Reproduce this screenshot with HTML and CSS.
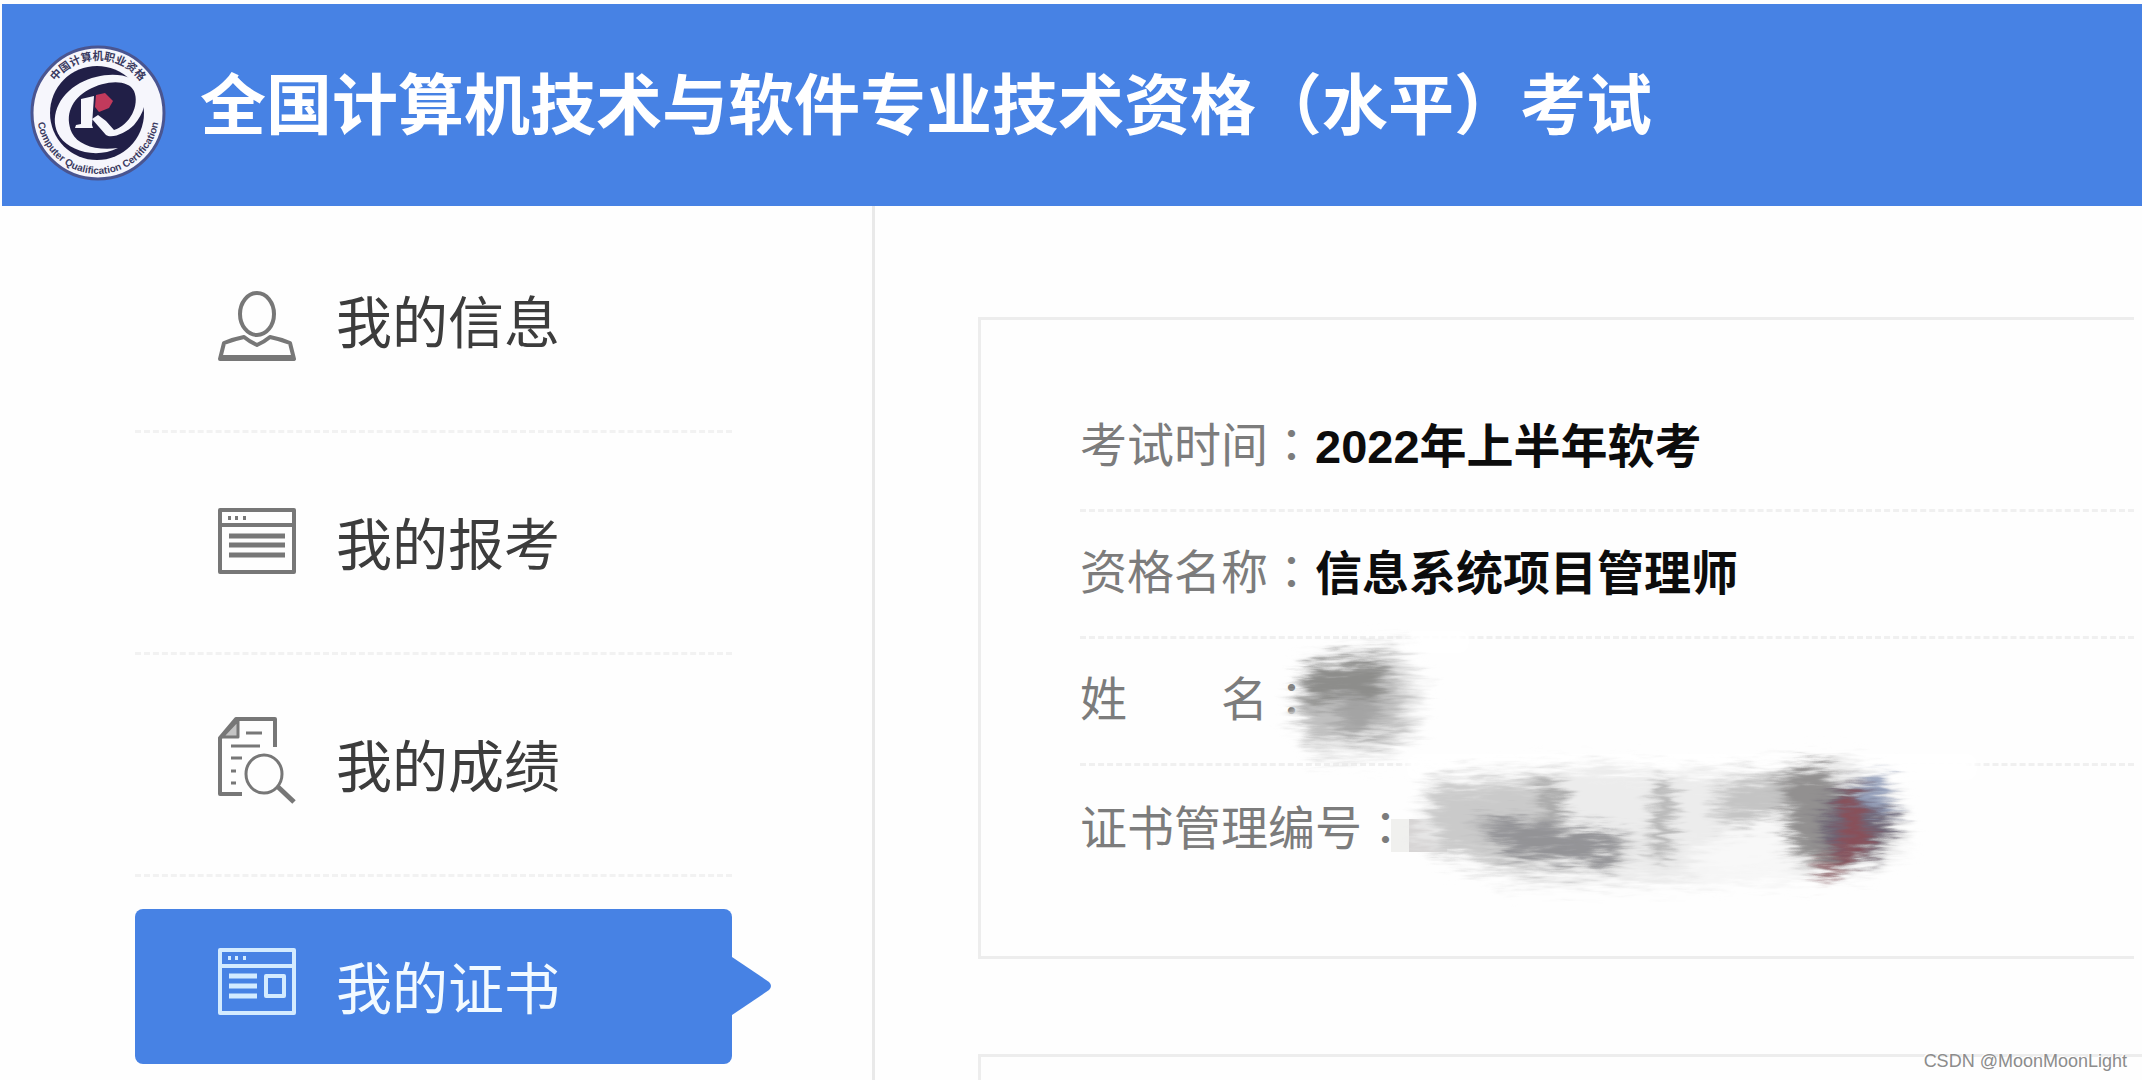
FILE: index.html
```html
<!DOCTYPE html>
<html lang="zh-CN">
<head>
    <meta charset="UTF-8">
    <meta name="viewport" content="width=device-width, initial-scale=1.0">
    <title>全国计算机技术与软件专业技术资格（水平）考试</title>
    <link rel="stylesheet" href="styles.css">
</head>
<body>
    <header class="header">
        <svg class="logo" viewBox="0 0 136 136" aria-hidden="true">
            <defs>
                <path id="ring-top" d="M15 68a53 53 0 0 1 106 0"/>
                <path id="ring-bottom" d="M7 68a61 61 0 0 0 122 0"/>
            </defs>
            <circle cx="68" cy="68" r="66" fill="#f6f6fc" stroke="#4a5590" stroke-width="3"/>
            <circle cx="67" cy="68" r="47" fill="#211f47"/>
            <text class="ring-text" font-size="11"><textPath href="#ring-top" startOffset="50%" text-anchor="middle">中国计算机职业资格</textPath></text>
            <text class="ring-text" font-size="10"><textPath href="#ring-bottom" startOffset="50%" text-anchor="middle">Computer Qualification Certification</textPath></text>
            <path d="M112 44C104 26 72 26 50 38C28 50 18 74 30 92C40 106 66 114 88 103C66 106 48 100 42 88C34 70 42 54 58 45C76 35 98 34 104 46C110 60 100 80 84 85L76 76L68 70L62 74L76 90C82 94 96 88 104 80C114 68 118 56 112 44Z" fill="#f6f6fc"/>
            <path d="M51 54L64 51L62 80L63 83H45L46 80L51 79Z" fill="#f6f6fc"/>
            <path d="M66 50L75 48L83 56L79 63L69 67L65 62Z" fill="#c23a5c"/>
        </svg>
        <h1>全国计算机技术与软件专业技术资格（水平）考试</h1>
    </header>

    <div class="page">
        <nav class="sidebar">
            <ul class="menu">
                <li>
                    <a href="#info">
                        <svg class="icon" viewBox="0 0 78 90" aria-hidden="true">
                            <ellipse cx="39" cy="38" rx="17" ry="21"/>
                            <path d="M2 83L6 67Q16 63 26 61Q32 66 39 69Q46 66 52 61Q62 63 72 67L76 83Z"/>
                            <path d="M4 81H74"/>
                        </svg>
                        <span>我的信息</span>
                    </a>
                </li>
                <li>
                    <a href="#apply">
                        <svg class="icon" viewBox="0 0 78 90" aria-hidden="true">
                            <path d="M2 12H76V74H2ZM2 27H76"/>
                            <path d="M10 20H13M17 20H20M25 20H28"/>
                            <path d="M11 38H67M11 47H67M11 57H67" stroke-width="5"/>
                        </svg>
                        <span>我的报考</span>
                    </a>
                </li>
                <li>
                    <a href="#score">
                        <svg class="icon" viewBox="0 0 78 90" aria-hidden="true">
                            <path d="M57 27V-1H18L2 18V74H24"/>
                            <path d="M20 0V17H4Z" fill="#c4c4c4" stroke-width="3"/>
                            <path d="M28 13H44M13 26H42M13 38H24M13 51H18M13 63H18" stroke-width="3"/>
                            <ellipse cx="46" cy="54" rx="18" ry="19" stroke-width="3"/>
                            <path d="M59 66L76 82" stroke-width="5"/>
                        </svg>
                        <span>我的成绩</span>
                    </a>
                </li>
                <li>
                    <a href="#cert" class="active" aria-current="page">
                        <svg class="icon" viewBox="0 0 78 90" aria-hidden="true">
                            <path d="M2 8H76V71H2ZM2 24H76"/>
                            <path d="M10 16H13M17 16H20M25 16H28"/>
                            <path d="M11 34H39M11 44H39M11 54H39" stroke-width="5"/>
                            <path d="M48 34H66V54H48Z"/>
                        </svg>
                        <span>我的证书</span>
                        <svg class="arrow" viewBox="0 0 40 58" aria-hidden="true">
                            <path d="M0 0L37 25Q41 29 37 33L0 58Z"/>
                        </svg>
                    </a>
                </li>
            </ul>
        </nav>

        <main class="content">
            <section class="card">
                <dl class="details">
                    <div class="row">
                        <dt>考试时间<span class="colon" lang="zh-TW">：</span></dt>
                        <dd>2022年上半年软考</dd>
                    </div>
                    <div class="row">
                        <dt>资格名称<span class="colon" lang="zh-TW">：</span></dt>
                        <dd>信息系统项目管理师</dd>
                    </div>
                    <div class="row">
                        <dt>姓　　名<span class="colon" lang="zh-TW">：</span></dt>
                        <dd>
                            <svg class="mask mask-name" viewBox="0 0 200 150" aria-hidden="true">
                                <defs>
                                    <filter id="scratch" x="-20%" y="-20%" width="140%" height="140%">
                                        <feGaussianBlur stdDeviation="7" result="soft"/>
                                        <feTurbulence type="fractalNoise" baseFrequency="0.03 0.2" numOctaves="3" seed="4" result="noise"/>
                                        <feDisplacementMap in="soft" in2="noise" scale="36" xChannelSelector="R" yChannelSelector="G"/>
                                    </filter>
                                    <filter id="haze" x="-20%" y="-20%" width="140%" height="140%">
                                        <feGaussianBlur stdDeviation="6"/>
                                    </filter>
                                </defs>
                                <path d="M145 0H210V22H145Z" fill="#fff" filter="url(#haze)"/>
                                <g filter="url(#scratch)">
                                    <path d="M48 24L140 12L162 50L158 100L132 124L60 128L34 90Z" fill="#e6e6e6"/>
                                    <path d="M46 36L130 22L146 60L138 106L52 110L36 72Z" fill="#c0c0c0"/>
                                    <path d="M46 36L122 30L126 66L50 72Z" fill="#8d8d8b"/>
                                    <path d="M78 66H120V104H78Z" fill="#a4a4a4"/>
                                </g>
                            </svg>
                        </dd>
                    </div>
                    <div class="row">
                        <dt>证书管理编号<span class="colon" lang="zh-TW">：</span></dt>
                        <dd>
                            <svg class="mask mask-number" viewBox="0 0 600 160" aria-hidden="true">
                                <path d="M20 10H590V36H20Z" fill="#fff" filter="url(#haze)"/>
                                <path d="M4 75H22V108H4Z" fill="#f0f0ee"/>
                                <path d="M22 75H60V108H22Z" fill="#d6d4d4"/>
                                <g filter="url(#scratch)">
                                    <path d="M40 32L180 22L330 28L460 14L510 40L520 110L470 130L300 140L130 140L70 118L30 96Z" fill="#ececec"/>
                                    <path d="M42 42L150 38L180 80L250 92L240 120L130 126L50 106Z" fill="#cacaca"/>
                                    <path d="M84 78L150 76L238 94L228 118L130 114Z" fill="#939396"/>
                                    <path d="M152 36L172 36L176 76L156 76Z" fill="#a5a5a5"/>
                                    <path d="M268 40L286 36L284 112L264 116Z" fill="#b0b0b0"/>
                                    <path d="M330 44L400 26L440 30L380 80L330 78Z" fill="#c4c4c4"/>
                                    <path d="M300 110L390 66L410 130L310 134Z" fill="#f8f8f8"/>
                                    <path d="M394 30L440 20L458 60L440 124L404 108Z" fill="#929090"/>
                                    <path d="M444 44L486 34L508 70L496 108L446 128L434 84Z" fill="#6c6474"/>
                                    <path d="M466 40L496 30L508 70L490 66Z" fill="#96a2bd"/>
                                    <path d="M448 56L468 48L488 98L436 136L430 120L458 98Z" fill="#895058"/>
                                </g>
                            </svg>
                        </dd>
                    </div>
                </dl>
            </section>
            <section class="card next"></section>
        </main>
    </div>

    <footer class="watermark">CSDN @MoonMoonLight</footer>
</body>
</html>
```

FILE: styles.css
```css
* {
    margin: 0;
    padding: 0;
    box-sizing: border-box;
}

body {
    height: 100vh;
    padding: 4px 0 0 2px;
    overflow: hidden;
    display: flex;
    flex-direction: column;
    font-family: "Liberation Sans", "Noto Sans CJK SC", sans-serif;
    background: #fefefe;
    color: #333;
}

.header {
    display: flex;
    align-items: center;
    gap: 34px;
    padding: 25px 28px;
    background: #4782e4;
    color: #fff;
}

.logo {
    width: 136px;
    height: 136px;
    margin-top: 16px;
}

.ring-text {
    font-weight: bold;
    fill: #3a3a60;
}

.header h1 {
    padding-top: 2px;
    font-size: 66px;
    line-height: 96px;
    font-weight: bold;
    white-space: nowrap;
}

.page {
    flex: 1;
    min-height: 0;
    display: flex;
    overflow: hidden;
}

.sidebar {
    flex: 0 0 873px;
    padding: 5px 140px 0 133px;
    border-right: 3px solid #e9e9e9;
}

.menu {
    list-style: none;
}

.menu li {
    padding: 32px 0;
    border-bottom: 3px dashed #f2f2f2;
}

.menu li:last-child {
    padding-bottom: 0;
    border-bottom: none;
}

.menu a {
    position: relative;
    display: flex;
    align-items: center;
    gap: 40px;
    height: 155px;
    padding-left: 83px;
    border-radius: 8px;
    font-size: 56px;
    line-height: 80px;
    color: #3c3c3c;
    text-decoration: none;
}

.menu a span {
    padding-top: 6px;
}

.menu a.active {
    background: #4782e4;
    color: #f2faff;
}

.icon {
    width: 78px;
    height: 90px;
    overflow: visible;
    fill: none;
    stroke: #777;
    stroke-width: 4;
    stroke-linejoin: round;
}

.active .icon {
    stroke: #d3ebff;
}

.arrow {
    position: absolute;
    left: 100%;
    top: 48px;
    width: 40px;
    height: 58px;
    fill: #4782e4;
}

.content {
    flex: 1;
    padding: 111px 0 0 103px;
}

.card {
    margin-right: 8px;
    padding: 65px 0 63px 99px;
    border: 3px solid #ededed;
    border-right: none;
}

.card.next {
    margin: 95px 0 0;
}

.row {
    display: flex;
    height: 127px;
    align-items: center;
    border-bottom: 3px dashed #f0f0f0;
    font-size: 47px;
    line-height: 68px;
}

.row:last-child {
    border-bottom: none;
}

.row dt {
    padding-bottom: 6px;
    color: #7c7c7c;
    white-space: nowrap;
}

.colon {
    font-family: "Noto Sans CJK TC", sans-serif;
}

.row dd {
    position: relative;
    font-weight: bold;
    color: #0c0c0c;
    white-space: nowrap;
}

.mask {
    position: absolute;
    overflow: visible;
}

.mask-name {
    left: -56px;
    top: -70px;
    width: 200px;
    height: 150px;
}

.mask-number {
    left: -22px;
    top: -86px;
    width: 600px;
    height: 160px;
}

.watermark {
    position: absolute;
    right: 15px;
    bottom: 6px;
    font-size: 18px;
    line-height: 26px;
    color: #8c8c8c;
    text-shadow: -1px -1px 0 #fff;
}
```
